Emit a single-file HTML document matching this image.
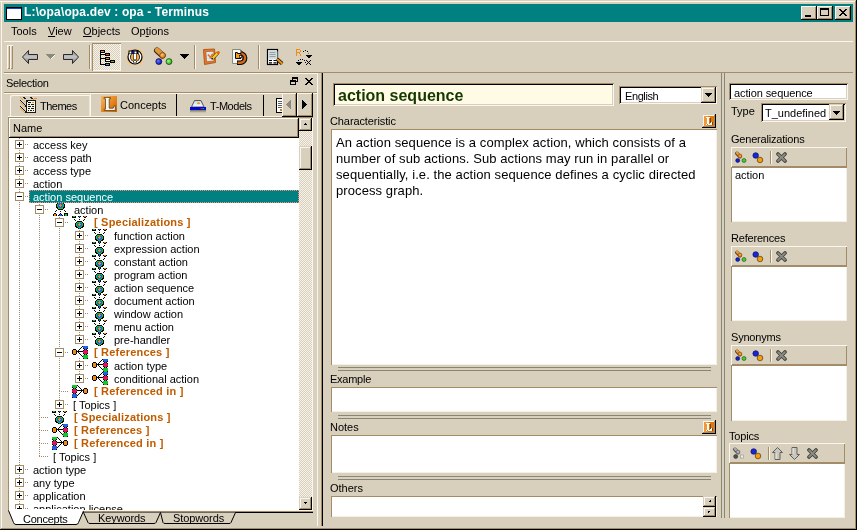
<!DOCTYPE html>
<html><head><meta charset="utf-8"><style>
html,body{margin:0;padding:0;width:857px;height:530px;overflow:hidden;background:#d8d0bd;}
body{position:relative;font-family:"Liberation Sans",sans-serif;font-size:11px;color:#000;}
div,svg{position:absolute;}
.t{white-space:nowrap;line-height:13px;font-size:11px;will-change:transform;}
.dith{background-color:#f6f2ea;background-image:linear-gradient(45deg,#d8d0bd 25%,transparent 25%,transparent 75%,#d8d0bd 75%),linear-gradient(45deg,#d8d0bd 25%,transparent 25%,transparent 75%,#d8d0bd 75%);background-size:2px 2px;background-position:0 0,1px 1px;}
</style></head><body>
<div style="left:0px;top:1px;width:856px;height:1px;background:#faf6ee"></div>
<div style="left:1px;top:1px;width:1px;height:527px;background:#faf6ee"></div>
<div style="left:0px;top:529px;width:857px;height:1px;background:#000000"></div>
<div style="left:856px;top:0px;width:1px;height:530px;background:#000000"></div>
<div style="left:1px;top:528px;width:855px;height:1px;background:#a28d68"></div>
<div style="left:855px;top:1px;width:1px;height:528px;background:#a28d68"></div>
<div style="left:4px;top:4px;width:849px;height:18px;background:#008080"></div>
<svg style="left:6px;top:7px" width="16" height="13" viewBox="0 0 16 13" shape-rendering="crispEdges"><rect x="0" y="0" width="16" height="1" fill="#000"/><rect x="0" y="1" width="1" height="1" fill="#000"/><rect x="1" y="1" width="14" height="1" fill="#2040c0"/><rect x="15" y="1" width="1" height="1" fill="#000"/><rect x="0" y="2" width="1" height="1" fill="#000"/><rect x="1" y="2" width="14" height="1" fill="#fff"/><rect x="15" y="2" width="1" height="1" fill="#000"/><rect x="0" y="3" width="1" height="1" fill="#000"/><rect x="1" y="3" width="14" height="1" fill="#fff"/><rect x="15" y="3" width="1" height="1" fill="#000"/><rect x="0" y="4" width="1" height="1" fill="#000"/><rect x="1" y="4" width="14" height="1" fill="#fff"/><rect x="15" y="4" width="1" height="1" fill="#000"/><rect x="0" y="5" width="1" height="1" fill="#000"/><rect x="1" y="5" width="14" height="1" fill="#fff"/><rect x="15" y="5" width="1" height="1" fill="#000"/><rect x="0" y="6" width="1" height="1" fill="#000"/><rect x="1" y="6" width="14" height="1" fill="#fff"/><rect x="15" y="6" width="1" height="1" fill="#000"/><rect x="0" y="7" width="1" height="1" fill="#000"/><rect x="1" y="7" width="14" height="1" fill="#fff"/><rect x="15" y="7" width="1" height="1" fill="#000"/><rect x="0" y="8" width="1" height="1" fill="#000"/><rect x="1" y="8" width="14" height="1" fill="#fff"/><rect x="15" y="8" width="1" height="1" fill="#000"/><rect x="0" y="9" width="1" height="1" fill="#000"/><rect x="1" y="9" width="14" height="1" fill="#fff"/><rect x="15" y="9" width="1" height="1" fill="#000"/><rect x="0" y="10" width="1" height="1" fill="#000"/><rect x="1" y="10" width="14" height="1" fill="#fff"/><rect x="15" y="10" width="1" height="1" fill="#000"/><rect x="0" y="11" width="1" height="1" fill="#000"/><rect x="1" y="11" width="14" height="1" fill="#fff"/><rect x="15" y="11" width="1" height="1" fill="#000"/><rect x="0" y="12" width="16" height="1" fill="#000"/></svg>
<div class="t" style="left:24px;top:4px;color:#fff;font-weight:bold;font-size:12px;line-height:16px;letter-spacing:0.15px">L:\opa\opa.dev : opa - Terminus</div>
<div style="left:801px;top:6px;width:16px;height:14px;box-shadow:inset -1px -1px #000000,inset 1px 1px #faf6ee,inset -2px -2px #a28d68,inset 2px 2px #d8d0bd;background:#d8d0bd"></div>
<div style="left:817px;top:6px;width:16px;height:14px;box-shadow:inset -1px -1px #000000,inset 1px 1px #faf6ee,inset -2px -2px #a28d68,inset 2px 2px #d8d0bd;background:#d8d0bd"></div>
<div style="left:835px;top:6px;width:16px;height:14px;box-shadow:inset -1px -1px #000000,inset 1px 1px #faf6ee,inset -2px -2px #a28d68,inset 2px 2px #d8d0bd;background:#d8d0bd"></div>
<div style="left:805px;top:15px;width:6px;height:2px;background:#000"></div>
<div style="left:820px;top:8px;width:9px;height:8px;box-shadow:inset 0 2px #000,inset 1px 0 #000,inset -1px 0 #000,inset 0 -1px #000"></div>
<svg style="left:839px;top:9px" width="8" height="7" viewBox="0 0 8 7" shape-rendering="crispEdges"><rect x="0" y="0" width="2" height="1" fill="#000"/><rect x="6" y="0" width="2" height="1" fill="#000"/><rect x="1" y="1" width="2" height="1" fill="#000"/><rect x="5" y="1" width="2" height="1" fill="#000"/><rect x="2" y="2" width="4" height="1" fill="#000"/><rect x="3" y="3" width="2" height="1" fill="#000"/><rect x="2" y="4" width="4" height="1" fill="#000"/><rect x="1" y="5" width="2" height="1" fill="#000"/><rect x="5" y="5" width="2" height="1" fill="#000"/><rect x="0" y="6" width="2" height="1" fill="#000"/><rect x="6" y="6" width="2" height="1" fill="#000"/></svg>
<div class="t" style="left:11px;top:25px;">Tools</div>
<div class="t" style="left:48px;top:25px;"><u>V</u>iew</div>
<div class="t" style="left:83px;top:25px;"><u>O</u>bjects</div>
<div class="t" style="left:131px;top:25px;">Op<u>t</u>ions</div>
<div style="left:4px;top:41px;width:849px;height:1px;background:#faf6ee"></div>
<div style="left:7px;top:45px;width:3px;height:24px;box-shadow:inset 1px 1px #faf6ee,inset -1px -1px #a28d68"></div>
<div style="left:10px;top:45px;width:3px;height:24px;box-shadow:inset 1px 1px #faf6ee,inset -1px -1px #a28d68"></div>
<div style="left:89px;top:45px;width:1px;height:24px;background:#a28d68"></div>
<div style="left:90px;top:45px;width:1px;height:24px;background:#faf6ee"></div>
<div style="left:194px;top:45px;width:1px;height:24px;background:#a28d68"></div>
<div style="left:195px;top:45px;width:1px;height:24px;background:#faf6ee"></div>
<div style="left:258px;top:45px;width:1px;height:24px;background:#a28d68"></div>
<div style="left:259px;top:45px;width:1px;height:24px;background:#faf6ee"></div>
<div style="left:92px;top:43px;width:29px;height:28px;box-shadow:inset 1px 1px #a28d68,inset -1px -1px #faf6ee"></div>
<div class="dith" style="left:93px;top:44px;width:27px;height:26px;"></div>
<div style="left:4px;top:72px;width:849px;height:1px;background:#a28d68"></div>
<div style="left:4px;top:73px;width:314px;height:1px;background:#faf6ee"></div>
<svg style="left:21px;top:49px" width="18" height="16" viewBox="0 0 18 16"><defs><linearGradient id="ag" x1="0" y1="0" x2="0" y2="1"><stop offset="0" stop-color="#8c8c8c"/><stop offset="0.5" stop-color="#c4c4c4"/><stop offset="1" stop-color="#7c7c7c"/></linearGradient></defs><path d="M1.5 8L7.5 1.5V5.5H16.5V10.5H7.5V14.5Z" fill="url(#ag)" stroke="#2a2a2a" stroke-width="1"/></svg>
<svg style="left:46px;top:54px" width="10" height="6" viewBox="0 0 10 6" shape-rendering="crispEdges"><path d="M0 0H9V1H8V2H7V3H6V4H5V5H4V4H3V3H2V2H1V1H0Z" fill="#8a8a7c"/><rect x="5" y="4" width="1" height="1" fill="#fff"/><rect x="6" y="3" width="1" height="1" fill="#fff"/><rect x="7" y="2" width="1" height="1" fill="#fff"/><rect x="8" y="1" width="1" height="1" fill="#fff"/></svg>
<svg style="left:62px;top:49px" width="18" height="16" viewBox="0 0 18 16"><path d="M16.5 8L10.5 1.5V5.5H1.5V10.5H10.5V14.5Z" fill="url(#ag)" stroke="#2a2a2a" stroke-width="1"/></svg>
<svg style="left:100px;top:50px" width="15" height="16" viewBox="0 0 15 16" shape-rendering="crispEdges"><rect x="0" y="0" width="5" height="1" fill="#000"/><rect x="0" y="1" width="1" height="1" fill="#000"/><rect x="1" y="1" width="3" height="1" fill="#f09020"/><rect x="4" y="1" width="1" height="1" fill="#000"/><rect x="0" y="2" width="5" height="1" fill="#000"/><rect x="0" y="3" width="1" height="1" fill="#000"/><rect x="1" y="3" width="4" height="1" fill="#fff"/><rect x="5" y="3" width="5" height="1" fill="#000"/><rect x="0" y="4" width="6" height="1" fill="#000"/><rect x="6" y="4" width="3" height="1" fill="#f04c18"/><rect x="9" y="4" width="1" height="1" fill="#000"/><rect x="0" y="5" width="1" height="1" fill="#000"/><rect x="5" y="5" width="5" height="1" fill="#000"/><rect x="0" y="6" width="1" height="1" fill="#000"/><rect x="0" y="7" width="1" height="1" fill="#000"/><rect x="5" y="7" width="5" height="1" fill="#000"/><rect x="0" y="8" width="6" height="1" fill="#000"/><rect x="6" y="8" width="3" height="1" fill="#c8a020"/><rect x="9" y="8" width="1" height="1" fill="#000"/><rect x="0" y="9" width="1" height="1" fill="#000"/><rect x="5" y="9" width="5" height="1" fill="#000"/><rect x="0" y="10" width="1" height="1" fill="#000"/><rect x="5" y="10" width="1" height="1" fill="#000"/><rect x="6" y="10" width="4" height="1" fill="#fff"/><rect x="10" y="10" width="5" height="1" fill="#000"/><rect x="0" y="11" width="1" height="1" fill="#000"/><rect x="5" y="11" width="6" height="1" fill="#000"/><rect x="11" y="11" width="3" height="1" fill="#88a818"/><rect x="14" y="11" width="1" height="1" fill="#000"/><rect x="0" y="12" width="1" height="1" fill="#000"/><rect x="10" y="12" width="5" height="1" fill="#000"/><rect x="0" y="13" width="1" height="1" fill="#000"/><rect x="5" y="13" width="5" height="1" fill="#000"/><rect x="0" y="14" width="6" height="1" fill="#000"/><rect x="6" y="14" width="3" height="1" fill="#5088f0"/><rect x="9" y="14" width="1" height="1" fill="#000"/><rect x="5" y="15" width="5" height="1" fill="#000"/></svg>
<svg style="left:127px;top:49px" width="16" height="16" viewBox="0 0 16 16">
<rect x="0" y="0" width="16" height="16" rx="4" fill="#f2c890"/>
<circle cx="8" cy="8" r="7.6" fill="#000"/>
<circle cx="8" cy="8" r="6.4" fill="#fff"/>
<circle cx="8" cy="8" r="4.9" fill="#000"/>
<circle cx="8" cy="8.2" r="4.1" fill="#f0a850"/>
<rect x="1.5" y="1.5" width="10" height="3.5" fill="#000"/>
<rect x="2.5" y="2.5" width="2" height="2" fill="#fff"/>
<rect x="4.5" y="2.2" width="3" height="2.6" fill="#101880"/>
<rect x="7.5" y="2.5" width="2" height="2" fill="#fff"/>
<rect x="6.5" y="5" width="3" height="6" fill="#000"/>
<rect x="7" y="5" width="2" height="5.5" fill="#fff"/>
<rect x="6.5" y="11.5" width="3" height="2.5" fill="#000"/>
<rect x="7" y="12" width="2" height="1.6" fill="#fff"/>
</svg>
<svg style="left:152px;top:46px" width="24" height="22" viewBox="0 0 24 22"><defs>
<radialGradient id="bo" cx="0.4" cy="0.4" r="0.6"><stop offset="0" stop-color="#ffc870"/><stop offset="1" stop-color="#d86a00"/></radialGradient>
<radialGradient id="bb" cx="0.4" cy="0.4" r="0.6"><stop offset="0" stop-color="#6a7aff"/><stop offset="1" stop-color="#0010b0"/></radialGradient>
<radialGradient id="bg" cx="0.4" cy="0.4" r="0.6"><stop offset="0" stop-color="#a0ff80"/><stop offset="1" stop-color="#20a010"/></radialGradient></defs>
<path d="M5 4.5L10.5 9.5" stroke="#302010" stroke-width="6" stroke-linecap="round"/>
<path d="M5 4L10.5 9" stroke="#e0983c" stroke-width="4.6" stroke-linecap="round"/>
<circle cx="10.6" cy="9.4" r="2.9" fill="url(#bo)" stroke="#503010" stroke-width="0.6"/>
<circle cx="6.8" cy="15.6" r="3" fill="url(#bb)" stroke="#000040" stroke-width="0.6"/>
<circle cx="17" cy="15.6" r="3" fill="url(#bg)" stroke="#003000" stroke-width="0.6"/>
</svg>
<svg style="left:180px;top:54px" width="9" height="5" viewBox="0 0 9 5" shape-rendering="crispEdges"><rect x="0" y="0" width="9" height="1" fill="#000"/><rect x="1" y="1" width="7" height="1" fill="#000"/><rect x="2" y="2" width="5" height="1" fill="#000"/><rect x="3" y="3" width="3" height="1" fill="#000"/><rect x="4" y="4" width="1" height="1" fill="#000"/></svg>
<svg style="left:200px;top:46px" width="24" height="22" viewBox="0 0 24 22">
<path d="M3.5 3.5L14.5 3L15.5 16.5L4.5 18.5Z" fill="#e07a30" stroke="#b85a18" stroke-width="1"/>
<path d="M5.8 5.5L13.8 5.2L14.2 15L6.5 15.8Z" fill="#d8e8ff" stroke="#c05a10" stroke-width="0.8"/>
<path d="M8.5 9.3L10.3 11.2L12.4 8.6M10.3 11.2L10.2 12.8" stroke="#f07010" stroke-width="1.5" fill="none"/>
<circle cx="8.5" cy="9.2" r="0.9" fill="#f07010"/><circle cx="12.4" cy="8.5" r="0.9" fill="#f07010"/>
<path d="M12.5 12.5L17.8 6.8" stroke="#5a4000" stroke-width="3.4"/>
<path d="M12.5 12.5L17.8 6.8" stroke="#f8d020" stroke-width="2.2"/>
<circle cx="18.3" cy="6.5" r="1.6" fill="#f06010"/>
<path d="M11.6 13.3L12.6 12.3" stroke="#000" stroke-width="1.6"/>
</svg>
<svg style="left:228px;top:46px" width="24" height="22" viewBox="0 0 24 22">
<path d="M4.5 3.5H12.5L14.5 5.5V17.5H4.5Z" fill="#f6f6f2" stroke="#8a8a7a" stroke-width="1"/>
<path d="M12 3.8L14.2 6" stroke="#404040" stroke-width="0.8"/>
<path d="M12.5 7.5A4.6 4.6 0 0 1 12.5 16.7H9" fill="none" stroke="#000" stroke-width="4.6"/>
<path d="M12.5 7.5A4.6 4.6 0 0 1 12.5 16.7H9.6" fill="none" stroke="#d4691c" stroke-width="2.6"/>
<path d="M7.5 6.5H9.5V7.5H13V12.5H7.5Z" fill="#f29a1c" stroke="#000" stroke-width="1"/>
<rect x="9.8" y="5.3" width="2" height="1.6" fill="#fff"/>
<rect x="11.5" y="9.6" width="2.2" height="1.8" fill="#fff" stroke="#000" stroke-width="0.6"/>
</svg>
<svg style="left:264px;top:46px" width="24" height="22" viewBox="0 0 24 22">
<rect x="3.5" y="3.5" width="10" height="15" fill="#fff" stroke="#000" stroke-width="1.2"/>
<path d="M5 14.5H8M9.5 14.5H12.5M5 16.8H8M9.5 16.8H12.5" stroke="#000" stroke-width="1.2"/>
<rect x="4" y="4" width="9.5" height="9.5" rx="2" fill="#d0dadc" opacity="0.95"/>
<path d="M5.5 6.5H11.5M5.5 8.5H11.5M5.5 10.5H11.5" stroke="#8a9aa0" stroke-width="0.9"/>
<path d="M13 13L18.2 17.6" stroke="#000" stroke-width="3.6"/>
<path d="M13 13L18.2 17.6" stroke="#f09010" stroke-width="2.2"/>
</svg>
<svg style="left:292px;top:46px" width="20" height="19" viewBox="0 0 20 19" shape-rendering="crispEdges"><rect x="4" y="3" width="4" height="1" fill="#f08c10"/><rect x="4" y="4" width="1" height="1" fill="#f08c10"/><rect x="8" y="4" width="1" height="1" fill="#f08c10"/><rect x="13" y="4" width="1" height="1" fill="#000"/><rect x="4" y="5" width="1" height="1" fill="#f08c10"/><rect x="8" y="5" width="1" height="1" fill="#f08c10"/><rect x="11" y="5" width="1" height="1" fill="#000"/><rect x="15" y="5" width="1" height="1" fill="#000"/><rect x="4" y="6" width="4" height="1" fill="#f08c10"/><rect x="4" y="7" width="1" height="1" fill="#f08c10"/><rect x="7" y="7" width="1" height="1" fill="#f08c10"/><rect x="16" y="7" width="1" height="1" fill="#707070"/><rect x="4" y="8" width="1" height="1" fill="#f08c10"/><rect x="8" y="8" width="1" height="1" fill="#f08c10"/><rect x="4" y="9" width="1" height="1" fill="#f08c10"/><rect x="8" y="9" width="1" height="1" fill="#f08c10"/><rect x="14" y="9" width="6" height="1" fill="#000"/><rect x="15" y="10" width="4" height="1" fill="#000"/><rect x="16" y="11" width="2" height="1" fill="#000"/><rect x="8" y="13" width="1" height="1" fill="#000"/><rect x="10" y="13" width="1" height="1" fill="#000"/><rect x="6" y="14" width="1" height="1" fill="#000"/><rect x="12" y="14" width="1" height="1" fill="#000"/><rect x="14" y="14" width="1" height="1" fill="#000"/><rect x="18" y="14" width="1" height="1" fill="#000"/><rect x="15" y="15" width="1" height="1" fill="#000"/><rect x="17" y="15" width="1" height="1" fill="#000"/><rect x="4" y="16" width="6" height="1" fill="#000"/><rect x="13" y="16" width="1" height="1" fill="#000"/><rect x="16" y="16" width="1" height="1" fill="#000"/><rect x="5" y="17" width="4" height="1" fill="#000"/><rect x="15" y="17" width="1" height="1" fill="#000"/><rect x="17" y="17" width="1" height="1" fill="#000"/><rect x="6" y="18" width="2" height="1" fill="#000"/><rect x="14" y="18" width="1" height="1" fill="#000"/><rect x="18" y="18" width="1" height="1" fill="#000"/></svg>
<div class="t" style="left:6px;top:77px;letter-spacing:-0.3px">Selection</div>
<div style="left:317px;top:73px;width:1px;height:20px;background:#faf6ee"></div>
<svg style="left:290px;top:77px" width="8" height="8" viewBox="0 0 8 8" shape-rendering="crispEdges"><rect x="2" y="0" width="6" height="1" fill="#000"/><rect x="2" y="1" width="6" height="1" fill="#000"/><rect x="2" y="2" width="1" height="1" fill="#000"/><rect x="7" y="2" width="1" height="1" fill="#000"/><rect x="0" y="3" width="6" height="1" fill="#000"/><rect x="7" y="3" width="1" height="1" fill="#000"/><rect x="0" y="4" width="8" height="1" fill="#000"/><rect x="0" y="5" width="1" height="1" fill="#000"/><rect x="5" y="5" width="1" height="1" fill="#000"/><rect x="0" y="6" width="1" height="1" fill="#000"/><rect x="5" y="6" width="1" height="1" fill="#000"/><rect x="0" y="7" width="6" height="1" fill="#000"/></svg>
<svg style="left:305px;top:78px" width="8" height="7" viewBox="0 0 8 7" shape-rendering="crispEdges"><rect x="0" y="0" width="2" height="1" fill="#000"/><rect x="6" y="0" width="2" height="1" fill="#000"/><rect x="1" y="1" width="2" height="1" fill="#000"/><rect x="5" y="1" width="2" height="1" fill="#000"/><rect x="2" y="2" width="4" height="1" fill="#000"/><rect x="3" y="3" width="2" height="1" fill="#000"/><rect x="2" y="4" width="4" height="1" fill="#000"/><rect x="1" y="5" width="2" height="1" fill="#000"/><rect x="5" y="5" width="2" height="1" fill="#000"/><rect x="0" y="6" width="2" height="1" fill="#000"/><rect x="6" y="6" width="2" height="1" fill="#000"/></svg>
<div style="left:4px;top:92px;width:313px;height:1px;background:#a28d68"></div>
<div style="left:4px;top:93px;width:313px;height:1px;background:#faf6ee"></div>
<div style="left:10px;top:95px;width:80px;height:21px;box-shadow:inset 1px 1px #faf6ee,inset -1px 0 #ebe6da;border-top-left-radius:2px"></div>
<svg style="left:16px;top:94px" width="24" height="19" viewBox="0 0 24 19" shape-rendering="crispEdges"><rect x="4" y="3" width="1" height="1" fill="#f0a040"/><rect x="7" y="3" width="2" height="1" fill="#181818"/><rect x="14" y="3" width="2" height="1" fill="#181818"/><rect x="5" y="4" width="1" height="1" fill="#f0a040"/><rect x="8" y="4" width="2" height="1" fill="#181818"/><rect x="15" y="4" width="2" height="1" fill="#181818"/><rect x="18" y="4" width="3" height="1" fill="#f08c20"/><rect x="6" y="5" width="1" height="1" fill="#f0a040"/><rect x="17" y="5" width="1" height="1" fill="#f08c20"/><rect x="4" y="6" width="1" height="1" fill="#181818"/><rect x="10" y="6" width="10" height="1" fill="#181818"/><rect x="5" y="7" width="1" height="1" fill="#181818"/><rect x="8" y="7" width="1" height="1" fill="#f0a040"/><rect x="10" y="7" width="2" height="1" fill="#181818"/><rect x="12" y="7" width="7" height="1" fill="#f8f4e6"/><rect x="19" y="7" width="1" height="1" fill="#181818"/><rect x="4" y="8" width="1" height="1" fill="#f0a040"/><rect x="6" y="8" width="1" height="1" fill="#181818"/><rect x="10" y="8" width="1" height="1" fill="#181818"/><rect x="11" y="8" width="1" height="1" fill="#f8f4e6"/><rect x="12" y="8" width="3" height="1" fill="#181818"/><rect x="15" y="8" width="1" height="1" fill="#f8f4e6"/><rect x="16" y="8" width="2" height="1" fill="#f08c20"/><rect x="18" y="8" width="1" height="1" fill="#f8f4e6"/><rect x="19" y="8" width="1" height="1" fill="#181818"/><rect x="5" y="9" width="1" height="1" fill="#f0a040"/><rect x="7" y="9" width="1" height="1" fill="#181818"/><rect x="10" y="9" width="1" height="1" fill="#181818"/><rect x="11" y="9" width="8" height="1" fill="#f8f4e6"/><rect x="19" y="9" width="1" height="1" fill="#181818"/><rect x="6" y="10" width="1" height="1" fill="#f0a040"/><rect x="8" y="10" width="1" height="1" fill="#181818"/><rect x="10" y="10" width="1" height="1" fill="#181818"/><rect x="11" y="10" width="1" height="1" fill="#f8f4e6"/><rect x="12" y="10" width="2" height="1" fill="#181818"/><rect x="14" y="10" width="1" height="1" fill="#f8f4e6"/><rect x="15" y="10" width="3" height="1" fill="#181818"/><rect x="18" y="10" width="1" height="1" fill="#f8f4e6"/><rect x="19" y="10" width="1" height="1" fill="#181818"/><rect x="7" y="11" width="1" height="1" fill="#f0a040"/><rect x="9" y="11" width="2" height="1" fill="#181818"/><rect x="11" y="11" width="8" height="1" fill="#f8f4e6"/><rect x="19" y="11" width="1" height="1" fill="#181818"/><rect x="4" y="12" width="1" height="1" fill="#181818"/><rect x="8" y="12" width="1" height="1" fill="#f0a040"/><rect x="9" y="12" width="2" height="1" fill="#181818"/><rect x="11" y="12" width="1" height="1" fill="#f8f4e6"/><rect x="12" y="12" width="3" height="1" fill="#181818"/><rect x="15" y="12" width="1" height="1" fill="#f8f4e6"/><rect x="16" y="12" width="2" height="1" fill="#181818"/><rect x="18" y="12" width="1" height="1" fill="#f8f4e6"/><rect x="19" y="12" width="1" height="1" fill="#181818"/><rect x="5" y="13" width="1" height="1" fill="#181818"/><rect x="10" y="13" width="1" height="1" fill="#181818"/><rect x="11" y="13" width="8" height="1" fill="#f8f4e6"/><rect x="19" y="13" width="1" height="1" fill="#181818"/><rect x="4" y="14" width="1" height="1" fill="#f0a040"/><rect x="6" y="14" width="1" height="1" fill="#181818"/><rect x="10" y="14" width="1" height="1" fill="#181818"/><rect x="11" y="14" width="1" height="1" fill="#f8f4e6"/><rect x="12" y="14" width="2" height="1" fill="#181818"/><rect x="14" y="14" width="1" height="1" fill="#f8f4e6"/><rect x="15" y="14" width="3" height="1" fill="#181818"/><rect x="18" y="14" width="1" height="1" fill="#f8f4e6"/><rect x="19" y="14" width="1" height="1" fill="#181818"/><rect x="5" y="15" width="1" height="1" fill="#f0a040"/><rect x="7" y="15" width="1" height="1" fill="#181818"/><rect x="10" y="15" width="1" height="1" fill="#181818"/><rect x="11" y="15" width="8" height="1" fill="#f8f4e6"/><rect x="19" y="15" width="1" height="1" fill="#181818"/><rect x="6" y="16" width="1" height="1" fill="#f0a040"/><rect x="8" y="16" width="1" height="1" fill="#181818"/><rect x="10" y="16" width="1" height="1" fill="#181818"/><rect x="11" y="16" width="1" height="1" fill="#f8f4e6"/><rect x="12" y="16" width="1" height="1" fill="#181818"/><rect x="13" y="16" width="1" height="1" fill="#f8f4e6"/><rect x="14" y="16" width="2" height="1" fill="#181818"/><rect x="16" y="16" width="1" height="1" fill="#f8f4e6"/><rect x="17" y="16" width="1" height="1" fill="#181818"/><rect x="18" y="16" width="1" height="1" fill="#f8f4e6"/><rect x="19" y="16" width="1" height="1" fill="#181818"/><rect x="7" y="17" width="1" height="1" fill="#f0a040"/><rect x="9" y="17" width="2" height="1" fill="#181818"/><rect x="11" y="17" width="8" height="1" fill="#f8f4e6"/><rect x="19" y="17" width="1" height="1" fill="#181818"/><rect x="8" y="18" width="1" height="1" fill="#f0a040"/><rect x="9" y="18" width="11" height="1" fill="#181818"/></svg>
<div class="t" style="left:40px;top:100px;letter-spacing:-0.5px">Themes</div>
<div style="left:90px;top:93px;width:87px;height:24px;background:#d8d0bd;box-shadow:inset 1px 1px #faf6ee,inset -1px 0 #000000"></div>
<svg style="left:101px;top:96px" width="16" height="16" viewBox="0 0 16 16"><defs><linearGradient id="og" x1="0" y1="0" x2="1" y2="1"><stop offset="0" stop-color="#f8b868"/><stop offset="0.5" stop-color="#e88a20"/><stop offset="1" stop-color="#c86000"/></linearGradient></defs><rect width="16" height="16" fill="url(#og)"/>
<path d="M3 1.5H9.5V2.8H8.2V12.2H12.2L13.5 9.5H14.3V14.5H3.2V13.2H4.5V2.8H3Z" fill="#f4f6fa" stroke="#503000" stroke-width="0.7"/></svg>
<div class="t" style="left:120px;top:99px;">Concepts</div>
<div style="left:177px;top:95px;width:87px;height:21px;box-shadow:inset -1px 0 #000000"></div>
<svg style="left:186px;top:94px" width="24" height="22" viewBox="0 0 24 22"><defs><linearGradient id="tm" x1="0" y1="0" x2="0" y2="1"><stop offset="0" stop-color="#c8d4d8"/><stop offset="1" stop-color="#ffffff"/></linearGradient><linearGradient id="ts" x1="0" y1="0" x2="0" y2="1"><stop offset="0" stop-color="#505040"/><stop offset="1" stop-color="#d8d0bd"/></linearGradient></defs>
<path d="M8.5 6.5H15L18 13H5.5Z" fill="url(#tm)" stroke="#505a5c" stroke-width="1"/>
<ellipse cx="12.5" cy="9.2" rx="1.5" ry="1" fill="#f09020"/>
<rect x="4" y="13" width="16" height="3" fill="#0008d0"/>
<rect x="14.6" y="14" width="1.2" height="1.2" fill="#e02020"/><rect x="16.6" y="14" width="1.2" height="1.2" fill="#20e020"/>
<rect x="4" y="16" width="16" height="3" fill="url(#ts)" opacity="0.7"/>
</svg>
<div class="t" style="left:210px;top:100px;letter-spacing:-0.45px">T-Models</div>
<div style="left:264px;top:95px;width:18px;height:21px;overflow:hidden">
<svg style="left:12px;top:3px" width="8" height="15" viewBox="0 0 8 15" shape-rendering="crispEdges"><rect x="0" y="0" width="8" height="15" fill="#000"/><rect x="1" y="1" width="7" height="13" fill="#fff"/><rect x="2" y="3" width="5" height="1" fill="#606060"/><rect x="2" y="5" width="5" height="1" fill="#606060"/><rect x="2" y="7" width="5" height="1" fill="#606060"/><rect x="2" y="9" width="5" height="1" fill="#606060"/><rect x="4" y="11" width="3" height="2" fill="#c08030"/></svg>
</div>
<div style="left:282px;top:93px;width:15px;height:24px;box-shadow:inset -1px -1px #000000,inset 1px 1px #faf6ee,inset -2px -2px #a28d68,inset 2px 2px #d8d0bd;background:#d8d0bd"></div>
<div style="left:297px;top:93px;width:16px;height:24px;box-shadow:inset -1px -1px #000000,inset 1px 1px #faf6ee,inset -2px -2px #a28d68,inset 2px 2px #d8d0bd;background:#d8d0bd"></div>
<svg style="left:286px;top:100px" width="5" height="9" viewBox="0 0 5 9" shape-rendering="crispEdges"><rect x="4" y="0" width="1" height="1" fill="#8a8a7c"/><rect x="3" y="1" width="2" height="1" fill="#8a8a7c"/><rect x="2" y="2" width="3" height="1" fill="#8a8a7c"/><rect x="1" y="3" width="4" height="1" fill="#8a8a7c"/><rect x="0" y="4" width="5" height="1" fill="#8a8a7c"/><rect x="1" y="5" width="4" height="1" fill="#8a8a7c"/><rect x="2" y="6" width="3" height="1" fill="#8a8a7c"/><rect x="3" y="7" width="2" height="1" fill="#8a8a7c"/><rect x="4" y="8" width="1" height="1" fill="#8a8a7c"/></svg>
<svg style="left:302px;top:100px" width="5" height="9" viewBox="0 0 5 9" shape-rendering="crispEdges"><rect x="0" y="0" width="1" height="1" fill="#000"/><rect x="0" y="1" width="2" height="1" fill="#000"/><rect x="0" y="2" width="3" height="1" fill="#000"/><rect x="0" y="3" width="4" height="1" fill="#000"/><rect x="0" y="4" width="5" height="1" fill="#000"/><rect x="0" y="5" width="4" height="1" fill="#000"/><rect x="0" y="6" width="3" height="1" fill="#000"/><rect x="0" y="7" width="2" height="1" fill="#000"/><rect x="0" y="8" width="1" height="1" fill="#000"/></svg>
<div style="left:8px;top:116px;width:274px;height:1px;background:#faf6ee"></div>
<div style="left:8px;top:117px;width:305px;height:394px;background:#fff;box-shadow:inset 1px 1px #a28d68,inset -1px -1px #f8f6f0"></div>
<div style="left:9px;top:118px;width:290px;height:20px;background:#d8d0bd;box-shadow:inset -1px -1px #000,inset 1px 1px #fff,inset -2px -2px #a28d68"></div>
<div class="t" style="left:13px;top:122px;">Name</div>
<div class="dith" style="left:299px;top:131px;width:13px;height:366px;"></div>
<div style="left:299px;top:118px;width:13px;height:13px;box-shadow:inset -1px -1px #000000,inset 1px 1px #d8d0bd,inset -2px -2px #a28d68,inset 2px 2px #faf6ee;background:#d8d0bd"></div>
<svg style="left:303px;top:123px" width="5" height="2" viewBox="0 0 5 2" shape-rendering="crispEdges"><rect x="2" y="0" width="1" height="1" fill="#000"/><rect x="1" y="1" width="3" height="1" fill="#000"/></svg>
<div style="left:299px;top:146px;width:13px;height:24px;box-shadow:inset -1px -1px #000000,inset 1px 1px #d8d0bd,inset -2px -2px #a28d68,inset 2px 2px #faf6ee;background:#d8d0bd"></div>
<div style="left:299px;top:497px;width:13px;height:13px;box-shadow:inset -1px -1px #000000,inset 1px 1px #d8d0bd,inset -2px -2px #a28d68,inset 2px 2px #faf6ee;background:#d8d0bd"></div>
<svg style="left:303px;top:502px" width="5" height="2" viewBox="0 0 5 2" shape-rendering="crispEdges"><rect x="1" y="0" width="3" height="1" fill="#000"/><rect x="2" y="1" width="1" height="1" fill="#000"/></svg>
<svg style="left:0;top:0;width:0;height:0"><defs><symbol id="spec" viewBox="0 0 16 13"><rect x="0" y="0" width="1" height="1" fill="#000"/><rect x="1" y="0" width="2" height="1" fill="#10c830"/><rect x="3" y="0" width="1" height="1" fill="#000"/><rect x="6" y="0" width="1" height="1" fill="#000"/><rect x="7" y="0" width="1" height="1" fill="#2060e8"/><rect x="8" y="0" width="1" height="1" fill="#000"/><rect x="11" y="0" width="1" height="1" fill="#000"/><rect x="12" y="0" width="2" height="1" fill="#f08c10"/><rect x="14" y="0" width="1" height="1" fill="#000"/><rect x="0" y="1" width="4" height="1" fill="#000"/><rect x="7" y="1" width="1" height="1" fill="#000"/><rect x="12" y="1" width="2" height="1" fill="#000"/><rect x="2" y="3" width="1" height="1" fill="#000"/><rect x="7" y="3" width="1" height="1" fill="#000"/><rect x="12" y="3" width="1" height="1" fill="#000"/><rect x="3" y="4" width="1" height="1" fill="#000"/><rect x="11" y="4" width="1" height="1" fill="#000"/><rect x="5" y="5" width="5" height="1" fill="#000"/><rect x="4" y="6" width="1" height="1" fill="#000"/><rect x="5" y="6" width="5" height="1" fill="#10c830"/><rect x="10" y="6" width="1" height="1" fill="#000"/><rect x="3" y="7" width="1" height="1" fill="#000"/><rect x="4" y="7" width="1" height="1" fill="#10c830"/><rect x="5" y="7" width="2" height="1" fill="#2060e8"/><rect x="7" y="7" width="1" height="1" fill="#f08c10"/><rect x="8" y="7" width="2" height="1" fill="#2060e8"/><rect x="10" y="7" width="1" height="1" fill="#10c830"/><rect x="11" y="7" width="1" height="1" fill="#000"/><rect x="3" y="8" width="1" height="1" fill="#000"/><rect x="4" y="8" width="1" height="1" fill="#10c830"/><rect x="5" y="8" width="1" height="1" fill="#2060e8"/><rect x="6" y="8" width="3" height="1" fill="#f08c10"/><rect x="9" y="8" width="1" height="1" fill="#2060e8"/><rect x="10" y="8" width="1" height="1" fill="#10c830"/><rect x="11" y="8" width="1" height="1" fill="#000"/><rect x="3" y="9" width="1" height="1" fill="#000"/><rect x="4" y="9" width="1" height="1" fill="#10c830"/><rect x="5" y="9" width="2" height="1" fill="#2060e8"/><rect x="7" y="9" width="1" height="1" fill="#f08c10"/><rect x="8" y="9" width="2" height="1" fill="#2060e8"/><rect x="10" y="9" width="1" height="1" fill="#10c830"/><rect x="11" y="9" width="1" height="1" fill="#000"/><rect x="3" y="10" width="2" height="1" fill="#000"/><rect x="5" y="10" width="1" height="1" fill="#10c830"/><rect x="6" y="10" width="3" height="1" fill="#2060e8"/><rect x="9" y="10" width="1" height="1" fill="#10c830"/><rect x="10" y="10" width="2" height="1" fill="#000"/><rect x="4" y="11" width="2" height="1" fill="#000"/><rect x="6" y="11" width="3" height="1" fill="#10c830"/><rect x="9" y="11" width="2" height="1" fill="#000"/><rect x="6" y="12" width="1" height="1" fill="#000"/><rect x="7" y="12" width="1" height="1" fill="#2060e8"/><rect x="8" y="12" width="1" height="1" fill="#000"/></symbol><symbol id="gen" viewBox="0 0 16 13"><rect x="5" y="0" width="1" height="1" fill="#000"/><rect x="6" y="0" width="1" height="1" fill="#10c830"/><rect x="7" y="0" width="3" height="1" fill="#2060e8"/><rect x="10" y="0" width="1" height="1" fill="#10c830"/><rect x="11" y="0" width="1" height="1" fill="#000"/><rect x="4" y="1" width="1" height="1" fill="#000"/><rect x="5" y="1" width="1" height="1" fill="#10c830"/><rect x="6" y="1" width="2" height="1" fill="#2060e8"/><rect x="8" y="1" width="1" height="1" fill="#f08c10"/><rect x="9" y="1" width="2" height="1" fill="#2060e8"/><rect x="11" y="1" width="1" height="1" fill="#10c830"/><rect x="12" y="1" width="1" height="1" fill="#000"/><rect x="4" y="2" width="1" height="1" fill="#000"/><rect x="5" y="2" width="1" height="1" fill="#10c830"/><rect x="6" y="2" width="1" height="1" fill="#2060e8"/><rect x="7" y="2" width="3" height="1" fill="#f08c10"/><rect x="10" y="2" width="1" height="1" fill="#2060e8"/><rect x="11" y="2" width="1" height="1" fill="#10c830"/><rect x="12" y="2" width="1" height="1" fill="#000"/><rect x="4" y="3" width="1" height="1" fill="#000"/><rect x="5" y="3" width="1" height="1" fill="#10c830"/><rect x="6" y="3" width="2" height="1" fill="#2060e8"/><rect x="8" y="3" width="1" height="1" fill="#f08c10"/><rect x="9" y="3" width="2" height="1" fill="#2060e8"/><rect x="11" y="3" width="1" height="1" fill="#10c830"/><rect x="12" y="3" width="1" height="1" fill="#000"/><rect x="4" y="4" width="2" height="1" fill="#000"/><rect x="6" y="4" width="1" height="1" fill="#10c830"/><rect x="7" y="4" width="3" height="1" fill="#2060e8"/><rect x="10" y="4" width="1" height="1" fill="#10c830"/><rect x="11" y="4" width="2" height="1" fill="#000"/><rect x="5" y="5" width="1" height="1" fill="#000"/><rect x="6" y="5" width="5" height="1" fill="#10c830"/><rect x="11" y="5" width="1" height="1" fill="#000"/><rect x="6" y="6" width="5" height="1" fill="#000"/><rect x="4" y="7" width="1" height="1" fill="#000"/><rect x="12" y="7" width="1" height="1" fill="#000"/><rect x="3" y="8" width="1" height="1" fill="#000"/><rect x="8" y="8" width="1" height="1" fill="#000"/><rect x="13" y="8" width="1" height="1" fill="#000"/><rect x="2" y="10" width="2" height="1" fill="#000"/><rect x="8" y="10" width="1" height="1" fill="#000"/><rect x="12" y="10" width="4" height="1" fill="#000"/><rect x="1" y="11" width="1" height="1" fill="#000"/><rect x="2" y="11" width="2" height="1" fill="#f08c10"/><rect x="4" y="11" width="1" height="1" fill="#000"/><rect x="7" y="11" width="1" height="1" fill="#000"/><rect x="8" y="11" width="1" height="1" fill="#2060e8"/><rect x="9" y="11" width="1" height="1" fill="#000"/><rect x="12" y="11" width="1" height="1" fill="#000"/><rect x="13" y="11" width="2" height="1" fill="#10c830"/><rect x="15" y="11" width="1" height="1" fill="#000"/><rect x="1" y="12" width="1" height="1" fill="#000"/><rect x="2" y="12" width="2" height="1" fill="#f08c10"/><rect x="4" y="12" width="1" height="1" fill="#000"/><rect x="6" y="12" width="1" height="1" fill="#000"/><rect x="7" y="12" width="3" height="1" fill="#2060e8"/><rect x="10" y="12" width="1" height="1" fill="#000"/><rect x="12" y="12" width="1" height="1" fill="#000"/><rect x="13" y="12" width="2" height="1" fill="#10c830"/><rect x="15" y="12" width="1" height="1" fill="#000"/></symbol><symbol id="ref" viewBox="0 0 16 13"><rect x="10" y="0" width="1" height="1" fill="#000"/><rect x="11" y="0" width="5" height="1" fill="#2060e8"/><rect x="9" y="1" width="1" height="1" fill="#000"/><rect x="11" y="1" width="5" height="1" fill="#2060e8"/><rect x="8" y="2" width="1" height="1" fill="#000"/><rect x="11" y="2" width="1" height="1" fill="#000"/><rect x="12" y="2" width="3" height="1" fill="#2060e8"/><rect x="15" y="2" width="1" height="1" fill="#000"/><rect x="1" y="3" width="3" height="1" fill="#000"/><rect x="7" y="3" width="1" height="1" fill="#000"/><rect x="12" y="3" width="1" height="1" fill="#000"/><rect x="13" y="3" width="1" height="1" fill="#2060e8"/><rect x="14" y="3" width="1" height="1" fill="#000"/><rect x="0" y="4" width="1" height="1" fill="#000"/><rect x="1" y="4" width="3" height="1" fill="#f08c10"/><rect x="4" y="4" width="1" height="1" fill="#000"/><rect x="6" y="4" width="1" height="1" fill="#000"/><rect x="11" y="4" width="1" height="1" fill="#000"/><rect x="12" y="4" width="3" height="1" fill="#e8105c"/><rect x="15" y="4" width="1" height="1" fill="#000"/><rect x="0" y="5" width="1" height="1" fill="#000"/><rect x="1" y="5" width="3" height="1" fill="#f08c10"/><rect x="4" y="5" width="7" height="1" fill="#000"/><rect x="11" y="5" width="5" height="1" fill="#e8105c"/><rect x="0" y="6" width="1" height="1" fill="#000"/><rect x="1" y="6" width="3" height="1" fill="#f08c10"/><rect x="4" y="6" width="1" height="1" fill="#000"/><rect x="6" y="6" width="1" height="1" fill="#000"/><rect x="11" y="6" width="5" height="1" fill="#e8105c"/><rect x="0" y="7" width="1" height="1" fill="#000"/><rect x="1" y="7" width="3" height="1" fill="#f08c10"/><rect x="4" y="7" width="1" height="1" fill="#000"/><rect x="7" y="7" width="1" height="1" fill="#000"/><rect x="11" y="7" width="1" height="1" fill="#000"/><rect x="12" y="7" width="3" height="1" fill="#e8105c"/><rect x="15" y="7" width="1" height="1" fill="#000"/><rect x="1" y="8" width="3" height="1" fill="#000"/><rect x="8" y="8" width="1" height="1" fill="#000"/><rect x="12" y="8" width="1" height="1" fill="#000"/><rect x="13" y="8" width="1" height="1" fill="#10c830"/><rect x="14" y="8" width="1" height="1" fill="#000"/><rect x="9" y="9" width="1" height="1" fill="#000"/><rect x="11" y="9" width="5" height="1" fill="#10c830"/><rect x="10" y="10" width="1" height="1" fill="#000"/><rect x="11" y="10" width="5" height="1" fill="#10c830"/><rect x="11" y="11" width="5" height="1" fill="#10c830"/><rect x="11" y="12" width="1" height="1" fill="#000"/><rect x="12" y="12" width="3" height="1" fill="#10c830"/><rect x="15" y="12" width="1" height="1" fill="#000"/></symbol><symbol id="refin" viewBox="0 0 16 13"><rect x="0" y="0" width="5" height="1" fill="#10c830"/><rect x="5" y="0" width="1" height="1" fill="#000"/><rect x="0" y="1" width="5" height="1" fill="#10c830"/><rect x="6" y="1" width="1" height="1" fill="#000"/><rect x="0" y="2" width="1" height="1" fill="#000"/><rect x="1" y="2" width="3" height="1" fill="#10c830"/><rect x="4" y="2" width="1" height="1" fill="#000"/><rect x="7" y="2" width="1" height="1" fill="#000"/><rect x="1" y="3" width="1" height="1" fill="#000"/><rect x="2" y="3" width="1" height="1" fill="#10c830"/><rect x="3" y="3" width="1" height="1" fill="#000"/><rect x="8" y="3" width="1" height="1" fill="#000"/><rect x="12" y="3" width="3" height="1" fill="#000"/><rect x="0" y="4" width="1" height="1" fill="#000"/><rect x="1" y="4" width="3" height="1" fill="#e8105c"/><rect x="4" y="4" width="1" height="1" fill="#000"/><rect x="9" y="4" width="1" height="1" fill="#000"/><rect x="11" y="4" width="1" height="1" fill="#000"/><rect x="12" y="4" width="3" height="1" fill="#f08c10"/><rect x="15" y="4" width="1" height="1" fill="#000"/><rect x="0" y="5" width="5" height="1" fill="#e8105c"/><rect x="5" y="5" width="7" height="1" fill="#000"/><rect x="12" y="5" width="3" height="1" fill="#f08c10"/><rect x="15" y="5" width="1" height="1" fill="#000"/><rect x="0" y="6" width="5" height="1" fill="#e8105c"/><rect x="9" y="6" width="1" height="1" fill="#000"/><rect x="11" y="6" width="1" height="1" fill="#000"/><rect x="12" y="6" width="3" height="1" fill="#f08c10"/><rect x="15" y="6" width="1" height="1" fill="#000"/><rect x="0" y="7" width="1" height="1" fill="#000"/><rect x="1" y="7" width="3" height="1" fill="#e8105c"/><rect x="4" y="7" width="1" height="1" fill="#000"/><rect x="8" y="7" width="1" height="1" fill="#000"/><rect x="11" y="7" width="1" height="1" fill="#000"/><rect x="12" y="7" width="3" height="1" fill="#f08c10"/><rect x="15" y="7" width="1" height="1" fill="#000"/><rect x="1" y="8" width="1" height="1" fill="#000"/><rect x="2" y="8" width="1" height="1" fill="#2060e8"/><rect x="3" y="8" width="1" height="1" fill="#000"/><rect x="7" y="8" width="1" height="1" fill="#000"/><rect x="12" y="8" width="3" height="1" fill="#000"/><rect x="0" y="9" width="5" height="1" fill="#2060e8"/><rect x="6" y="9" width="1" height="1" fill="#000"/><rect x="0" y="10" width="5" height="1" fill="#2060e8"/><rect x="5" y="10" width="1" height="1" fill="#000"/><rect x="0" y="11" width="5" height="1" fill="#2060e8"/><rect x="0" y="12" width="1" height="1" fill="#000"/><rect x="1" y="12" width="3" height="1" fill="#2060e8"/><rect x="4" y="12" width="1" height="1" fill="#000"/></symbol></defs></svg>
<div style="left:9px;top:138px;width:290px;height:372px;overflow:hidden">
<div style="left:20px;top:52px;width:270px;height:13px;background:#008080"></div>
<div style="left:20px;top:52px;width:270px;height:13px;box-sizing:border-box;border:1px dotted #ff9080"></div>
<div style="left:10px;top:6px;width:1px;height:13px;background-image:linear-gradient(to bottom,#a28d68 50%,transparent 50%);background-size:1px 2px"></div>
<div style="left:16px;top:6px;width:4px;height:1px;background-image:linear-gradient(to right,#a28d68 50%,transparent 50%);background-size:2px 1px"></div>
<div style="left:10px;top:19px;width:1px;height:13px;background-image:linear-gradient(to bottom,#a28d68 50%,transparent 50%);background-size:1px 2px"></div>
<div style="left:16px;top:19px;width:4px;height:1px;background-image:linear-gradient(to right,#a28d68 50%,transparent 50%);background-size:2px 1px"></div>
<div style="left:10px;top:32px;width:1px;height:13px;background-image:linear-gradient(to bottom,#a28d68 50%,transparent 50%);background-size:1px 2px"></div>
<div style="left:16px;top:32px;width:4px;height:1px;background-image:linear-gradient(to right,#a28d68 50%,transparent 50%);background-size:2px 1px"></div>
<div style="left:10px;top:45px;width:1px;height:13px;background-image:linear-gradient(to bottom,#a28d68 50%,transparent 50%);background-size:1px 2px"></div>
<div style="left:16px;top:45px;width:4px;height:1px;background-image:linear-gradient(to right,#a28d68 50%,transparent 50%);background-size:2px 1px"></div>
<div style="left:10px;top:58px;width:1px;height:273px;background-image:linear-gradient(to bottom,#a28d68 50%,transparent 50%);background-size:1px 2px"></div>
<div style="left:16px;top:58px;width:4px;height:1px;background-image:linear-gradient(to right,#a28d68 50%,transparent 50%);background-size:2px 1px"></div>
<div style="left:30px;top:71px;width:1px;height:208px;background-image:linear-gradient(to bottom,#a28d68 50%,transparent 50%);background-size:1px 2px"></div>
<div style="left:30px;top:64px;width:1px;height:7px;background-image:linear-gradient(to bottom,#a28d68 50%,transparent 50%);background-size:1px 2px"></div>
<div style="left:36px;top:71px;width:4px;height:1px;background-image:linear-gradient(to right,#a28d68 50%,transparent 50%);background-size:2px 1px"></div>
<div style="left:50px;top:84px;width:1px;height:130px;background-image:linear-gradient(to bottom,#a28d68 50%,transparent 50%);background-size:1px 2px"></div>
<div style="left:50px;top:77px;width:1px;height:7px;background-image:linear-gradient(to bottom,#a28d68 50%,transparent 50%);background-size:1px 2px"></div>
<div style="left:56px;top:84px;width:4px;height:1px;background-image:linear-gradient(to right,#a28d68 50%,transparent 50%);background-size:2px 1px"></div>
<div style="left:70px;top:97px;width:1px;height:13px;background-image:linear-gradient(to bottom,#a28d68 50%,transparent 50%);background-size:1px 2px"></div>
<div style="left:70px;top:90px;width:1px;height:7px;background-image:linear-gradient(to bottom,#a28d68 50%,transparent 50%);background-size:1px 2px"></div>
<div style="left:76px;top:97px;width:4px;height:1px;background-image:linear-gradient(to right,#a28d68 50%,transparent 50%);background-size:2px 1px"></div>
<div style="left:70px;top:110px;width:1px;height:13px;background-image:linear-gradient(to bottom,#a28d68 50%,transparent 50%);background-size:1px 2px"></div>
<div style="left:76px;top:110px;width:4px;height:1px;background-image:linear-gradient(to right,#a28d68 50%,transparent 50%);background-size:2px 1px"></div>
<div style="left:70px;top:123px;width:1px;height:13px;background-image:linear-gradient(to bottom,#a28d68 50%,transparent 50%);background-size:1px 2px"></div>
<div style="left:76px;top:123px;width:4px;height:1px;background-image:linear-gradient(to right,#a28d68 50%,transparent 50%);background-size:2px 1px"></div>
<div style="left:70px;top:136px;width:1px;height:13px;background-image:linear-gradient(to bottom,#a28d68 50%,transparent 50%);background-size:1px 2px"></div>
<div style="left:76px;top:136px;width:4px;height:1px;background-image:linear-gradient(to right,#a28d68 50%,transparent 50%);background-size:2px 1px"></div>
<div style="left:70px;top:149px;width:1px;height:13px;background-image:linear-gradient(to bottom,#a28d68 50%,transparent 50%);background-size:1px 2px"></div>
<div style="left:76px;top:149px;width:4px;height:1px;background-image:linear-gradient(to right,#a28d68 50%,transparent 50%);background-size:2px 1px"></div>
<div style="left:70px;top:162px;width:1px;height:13px;background-image:linear-gradient(to bottom,#a28d68 50%,transparent 50%);background-size:1px 2px"></div>
<div style="left:76px;top:162px;width:4px;height:1px;background-image:linear-gradient(to right,#a28d68 50%,transparent 50%);background-size:2px 1px"></div>
<div style="left:70px;top:175px;width:1px;height:13px;background-image:linear-gradient(to bottom,#a28d68 50%,transparent 50%);background-size:1px 2px"></div>
<div style="left:76px;top:175px;width:4px;height:1px;background-image:linear-gradient(to right,#a28d68 50%,transparent 50%);background-size:2px 1px"></div>
<div style="left:70px;top:188px;width:1px;height:13px;background-image:linear-gradient(to bottom,#a28d68 50%,transparent 50%);background-size:1px 2px"></div>
<div style="left:76px;top:188px;width:4px;height:1px;background-image:linear-gradient(to right,#a28d68 50%,transparent 50%);background-size:2px 1px"></div>
<div style="left:76px;top:201px;width:4px;height:1px;background-image:linear-gradient(to right,#a28d68 50%,transparent 50%);background-size:2px 1px"></div>
<div style="left:50px;top:214px;width:1px;height:39px;background-image:linear-gradient(to bottom,#a28d68 50%,transparent 50%);background-size:1px 2px"></div>
<div style="left:56px;top:214px;width:4px;height:1px;background-image:linear-gradient(to right,#a28d68 50%,transparent 50%);background-size:2px 1px"></div>
<div style="left:70px;top:227px;width:1px;height:13px;background-image:linear-gradient(to bottom,#a28d68 50%,transparent 50%);background-size:1px 2px"></div>
<div style="left:70px;top:220px;width:1px;height:7px;background-image:linear-gradient(to bottom,#a28d68 50%,transparent 50%);background-size:1px 2px"></div>
<div style="left:76px;top:227px;width:4px;height:1px;background-image:linear-gradient(to right,#a28d68 50%,transparent 50%);background-size:2px 1px"></div>
<div style="left:76px;top:240px;width:4px;height:1px;background-image:linear-gradient(to right,#a28d68 50%,transparent 50%);background-size:2px 1px"></div>
<div style="left:50px;top:253px;width:1px;height:13px;background-image:linear-gradient(to bottom,#a28d68 50%,transparent 50%);background-size:1px 2px"></div>
<div style="left:50px;top:253px;width:10px;height:1px;background-image:linear-gradient(to right,#a28d68 50%,transparent 50%);background-size:2px 1px"></div>
<div style="left:56px;top:266px;width:4px;height:1px;background-image:linear-gradient(to right,#a28d68 50%,transparent 50%);background-size:2px 1px"></div>
<div style="left:30px;top:279px;width:1px;height:13px;background-image:linear-gradient(to bottom,#a28d68 50%,transparent 50%);background-size:1px 2px"></div>
<div style="left:30px;top:279px;width:10px;height:1px;background-image:linear-gradient(to right,#a28d68 50%,transparent 50%);background-size:2px 1px"></div>
<div style="left:30px;top:292px;width:1px;height:13px;background-image:linear-gradient(to bottom,#a28d68 50%,transparent 50%);background-size:1px 2px"></div>
<div style="left:30px;top:292px;width:10px;height:1px;background-image:linear-gradient(to right,#a28d68 50%,transparent 50%);background-size:2px 1px"></div>
<div style="left:30px;top:305px;width:1px;height:13px;background-image:linear-gradient(to bottom,#a28d68 50%,transparent 50%);background-size:1px 2px"></div>
<div style="left:30px;top:305px;width:10px;height:1px;background-image:linear-gradient(to right,#a28d68 50%,transparent 50%);background-size:2px 1px"></div>
<div style="left:30px;top:318px;width:10px;height:1px;background-image:linear-gradient(to right,#a28d68 50%,transparent 50%);background-size:2px 1px"></div>
<div style="left:10px;top:331px;width:1px;height:13px;background-image:linear-gradient(to bottom,#a28d68 50%,transparent 50%);background-size:1px 2px"></div>
<div style="left:16px;top:331px;width:4px;height:1px;background-image:linear-gradient(to right,#a28d68 50%,transparent 50%);background-size:2px 1px"></div>
<div style="left:10px;top:344px;width:1px;height:13px;background-image:linear-gradient(to bottom,#a28d68 50%,transparent 50%);background-size:1px 2px"></div>
<div style="left:16px;top:344px;width:4px;height:1px;background-image:linear-gradient(to right,#a28d68 50%,transparent 50%);background-size:2px 1px"></div>
<div style="left:10px;top:357px;width:1px;height:13px;background-image:linear-gradient(to bottom,#a28d68 50%,transparent 50%);background-size:1px 2px"></div>
<div style="left:16px;top:357px;width:4px;height:1px;background-image:linear-gradient(to right,#a28d68 50%,transparent 50%);background-size:2px 1px"></div>
<div style="left:10px;top:370px;width:1px;height:10px;background-image:linear-gradient(to bottom,#a28d68 50%,transparent 50%);background-size:1px 2px"></div>
<div style="left:16px;top:370px;width:4px;height:1px;background-image:linear-gradient(to right,#a28d68 50%,transparent 50%);background-size:2px 1px"></div>
<div style="left:10px;top:0px;width:1px;height:6px;background-image:linear-gradient(to bottom,#a28d68 50%,transparent 50%);background-size:1px 2px"></div>
<div style="left:6px;top:2px;width:9px;height:9px;background:#fff;box-shadow:inset 0 0 0 1px #a28d68"></div>
<div style="left:8px;top:6px;width:5px;height:1px;background:#000"></div>
<div style="left:10px;top:4px;width:1px;height:5px;background:#000"></div>
<div class="t" style="left:24px;top:1px;">access key</div>
<div style="left:6px;top:15px;width:9px;height:9px;background:#fff;box-shadow:inset 0 0 0 1px #a28d68"></div>
<div style="left:8px;top:19px;width:5px;height:1px;background:#000"></div>
<div style="left:10px;top:17px;width:1px;height:5px;background:#000"></div>
<div class="t" style="left:24px;top:14px;">access path</div>
<div style="left:6px;top:28px;width:9px;height:9px;background:#fff;box-shadow:inset 0 0 0 1px #a28d68"></div>
<div style="left:8px;top:32px;width:5px;height:1px;background:#000"></div>
<div style="left:10px;top:30px;width:1px;height:5px;background:#000"></div>
<div class="t" style="left:24px;top:27px;">access type</div>
<div style="left:6px;top:41px;width:9px;height:9px;background:#fff;box-shadow:inset 0 0 0 1px #a28d68"></div>
<div style="left:8px;top:45px;width:5px;height:1px;background:#000"></div>
<div style="left:10px;top:43px;width:1px;height:5px;background:#000"></div>
<div class="t" style="left:24px;top:40px;">action</div>
<div style="left:6px;top:54px;width:9px;height:9px;background:#fff;box-shadow:inset 0 0 0 1px #a28d68"></div>
<div style="left:8px;top:58px;width:5px;height:1px;background:#000"></div>
<div class="t" style="left:24px;top:53px;color:#fff">action sequence</div>
<div style="left:26px;top:67px;width:9px;height:9px;background:#fff;box-shadow:inset 0 0 0 1px #a28d68"></div>
<div style="left:28px;top:71px;width:5px;height:1px;background:#000"></div>
<svg style="left:43px;top:65px" width="16" height="13"><use href="#gen"/></svg>
<div class="t" style="left:65px;top:66px;">action</div>
<div style="left:46px;top:80px;width:9px;height:9px;background:#fff;box-shadow:inset 0 0 0 1px #a28d68"></div>
<div style="left:48px;top:84px;width:5px;height:1px;background:#000"></div>
<svg style="left:63px;top:78px" width="16" height="13"><use href="#spec"/></svg>
<div class="t" style="left:85px;top:78px;font-weight:bold;color:#c05c00;letter-spacing:0.2px">[ Specializations ]</div>
<div style="left:66px;top:93px;width:9px;height:9px;background:#fff;box-shadow:inset 0 0 0 1px #a28d68"></div>
<div style="left:68px;top:97px;width:5px;height:1px;background:#000"></div>
<div style="left:70px;top:95px;width:1px;height:5px;background:#000"></div>
<svg style="left:83px;top:91px" width="16" height="13"><use href="#spec"/></svg>
<div class="t" style="left:105px;top:92px;">function action</div>
<div style="left:66px;top:106px;width:9px;height:9px;background:#fff;box-shadow:inset 0 0 0 1px #a28d68"></div>
<div style="left:68px;top:110px;width:5px;height:1px;background:#000"></div>
<div style="left:70px;top:108px;width:1px;height:5px;background:#000"></div>
<svg style="left:83px;top:104px" width="16" height="13"><use href="#spec"/></svg>
<div class="t" style="left:105px;top:105px;">expression action</div>
<div style="left:66px;top:119px;width:9px;height:9px;background:#fff;box-shadow:inset 0 0 0 1px #a28d68"></div>
<div style="left:68px;top:123px;width:5px;height:1px;background:#000"></div>
<div style="left:70px;top:121px;width:1px;height:5px;background:#000"></div>
<svg style="left:83px;top:117px" width="16" height="13"><use href="#spec"/></svg>
<div class="t" style="left:105px;top:118px;">constant action</div>
<div style="left:66px;top:132px;width:9px;height:9px;background:#fff;box-shadow:inset 0 0 0 1px #a28d68"></div>
<div style="left:68px;top:136px;width:5px;height:1px;background:#000"></div>
<div style="left:70px;top:134px;width:1px;height:5px;background:#000"></div>
<svg style="left:83px;top:130px" width="16" height="13"><use href="#spec"/></svg>
<div class="t" style="left:105px;top:131px;">program action</div>
<div style="left:66px;top:145px;width:9px;height:9px;background:#fff;box-shadow:inset 0 0 0 1px #a28d68"></div>
<div style="left:68px;top:149px;width:5px;height:1px;background:#000"></div>
<div style="left:70px;top:147px;width:1px;height:5px;background:#000"></div>
<svg style="left:83px;top:143px" width="16" height="13"><use href="#spec"/></svg>
<div class="t" style="left:105px;top:144px;">action sequence</div>
<div style="left:66px;top:158px;width:9px;height:9px;background:#fff;box-shadow:inset 0 0 0 1px #a28d68"></div>
<div style="left:68px;top:162px;width:5px;height:1px;background:#000"></div>
<div style="left:70px;top:160px;width:1px;height:5px;background:#000"></div>
<svg style="left:83px;top:156px" width="16" height="13"><use href="#spec"/></svg>
<div class="t" style="left:105px;top:157px;">document action</div>
<div style="left:66px;top:171px;width:9px;height:9px;background:#fff;box-shadow:inset 0 0 0 1px #a28d68"></div>
<div style="left:68px;top:175px;width:5px;height:1px;background:#000"></div>
<div style="left:70px;top:173px;width:1px;height:5px;background:#000"></div>
<svg style="left:83px;top:169px" width="16" height="13"><use href="#spec"/></svg>
<div class="t" style="left:105px;top:170px;">window action</div>
<div style="left:66px;top:184px;width:9px;height:9px;background:#fff;box-shadow:inset 0 0 0 1px #a28d68"></div>
<div style="left:68px;top:188px;width:5px;height:1px;background:#000"></div>
<div style="left:70px;top:186px;width:1px;height:5px;background:#000"></div>
<svg style="left:83px;top:182px" width="16" height="13"><use href="#spec"/></svg>
<div class="t" style="left:105px;top:183px;">menu action</div>
<div style="left:66px;top:197px;width:9px;height:9px;background:#fff;box-shadow:inset 0 0 0 1px #a28d68"></div>
<div style="left:68px;top:201px;width:5px;height:1px;background:#000"></div>
<div style="left:70px;top:199px;width:1px;height:5px;background:#000"></div>
<svg style="left:83px;top:195px" width="16" height="13"><use href="#spec"/></svg>
<div class="t" style="left:105px;top:196px;">pre-handler</div>
<div style="left:46px;top:210px;width:9px;height:9px;background:#fff;box-shadow:inset 0 0 0 1px #a28d68"></div>
<div style="left:48px;top:214px;width:5px;height:1px;background:#000"></div>
<svg style="left:63px;top:208px" width="16" height="13"><use href="#ref"/></svg>
<div class="t" style="left:85px;top:208px;font-weight:bold;color:#c05c00;letter-spacing:0.2px">[ References ]</div>
<div style="left:66px;top:223px;width:9px;height:9px;background:#fff;box-shadow:inset 0 0 0 1px #a28d68"></div>
<div style="left:68px;top:227px;width:5px;height:1px;background:#000"></div>
<div style="left:70px;top:225px;width:1px;height:5px;background:#000"></div>
<svg style="left:83px;top:221px" width="16" height="13"><use href="#ref"/></svg>
<div class="t" style="left:105px;top:222px;">action type</div>
<div style="left:66px;top:236px;width:9px;height:9px;background:#fff;box-shadow:inset 0 0 0 1px #a28d68"></div>
<div style="left:68px;top:240px;width:5px;height:1px;background:#000"></div>
<div style="left:70px;top:238px;width:1px;height:5px;background:#000"></div>
<svg style="left:83px;top:234px" width="16" height="13"><use href="#ref"/></svg>
<div class="t" style="left:105px;top:235px;">conditional action</div>
<svg style="left:63px;top:247px" width="16" height="13"><use href="#refin"/></svg>
<div class="t" style="left:85px;top:247px;font-weight:bold;color:#c05c00;letter-spacing:0.2px">[ Referenced in ]</div>
<div style="left:46px;top:262px;width:9px;height:9px;background:#fff;box-shadow:inset 0 0 0 1px #a28d68"></div>
<div style="left:48px;top:266px;width:5px;height:1px;background:#000"></div>
<div style="left:50px;top:264px;width:1px;height:5px;background:#000"></div>
<div class="t" style="left:64px;top:261px;">[ Topics ]</div>
<svg style="left:43px;top:273px" width="16" height="13"><use href="#spec"/></svg>
<div class="t" style="left:65px;top:273px;font-weight:bold;color:#c05c00;letter-spacing:0.2px">[ Specializations ]</div>
<svg style="left:43px;top:286px" width="16" height="13"><use href="#ref"/></svg>
<div class="t" style="left:65px;top:286px;font-weight:bold;color:#c05c00;letter-spacing:0.2px">[ References ]</div>
<svg style="left:43px;top:299px" width="16" height="13"><use href="#refin"/></svg>
<div class="t" style="left:65px;top:299px;font-weight:bold;color:#c05c00;letter-spacing:0.2px">[ Referenced in ]</div>
<div class="t" style="left:44px;top:313px;">[ Topics ]</div>
<div style="left:6px;top:327px;width:9px;height:9px;background:#fff;box-shadow:inset 0 0 0 1px #a28d68"></div>
<div style="left:8px;top:331px;width:5px;height:1px;background:#000"></div>
<div style="left:10px;top:329px;width:1px;height:5px;background:#000"></div>
<div class="t" style="left:24px;top:326px;">action type</div>
<div style="left:6px;top:340px;width:9px;height:9px;background:#fff;box-shadow:inset 0 0 0 1px #a28d68"></div>
<div style="left:8px;top:344px;width:5px;height:1px;background:#000"></div>
<div style="left:10px;top:342px;width:1px;height:5px;background:#000"></div>
<div class="t" style="left:24px;top:339px;">any type</div>
<div style="left:6px;top:353px;width:9px;height:9px;background:#fff;box-shadow:inset 0 0 0 1px #a28d68"></div>
<div style="left:8px;top:357px;width:5px;height:1px;background:#000"></div>
<div style="left:10px;top:355px;width:1px;height:5px;background:#000"></div>
<div class="t" style="left:24px;top:352px;">application</div>
<div style="left:6px;top:366px;width:9px;height:9px;background:#fff;box-shadow:inset 0 0 0 1px #a28d68"></div>
<div style="left:8px;top:370px;width:5px;height:1px;background:#000"></div>
<div style="left:10px;top:368px;width:1px;height:5px;background:#000"></div>
<div class="t" style="left:24px;top:365px;">application license</div>
</div>
<svg style="left:0;top:509px" width="320" height="20" viewBox="0 0 320 20">
<rect x="83" y="2" width="230" height="1" fill="#a28d68"/>
<rect x="83" y="3" width="230" height="1" fill="#000"/>
<path d="M160.5 3.5L156 13.5Q155.5 14.5 154 14.5H90Q88.5 14.5 88 13.5L83.5 3.5" fill="#d8d0bd" stroke="#000" stroke-width="1"/>
<path d="M235.5 3.5L231 13.5Q230.5 14.5 229 14.5H165Q163.5 14.5 163 13.5L160.5 3.5" fill="#d8d0bd" stroke="#000" stroke-width="1"/>
<path d="M8.5 1.5L13.5 13.5Q14 15.5 16 15.5H76Q78 15.5 78.5 13.5L83.5 2" fill="#fff" stroke="#000" stroke-width="1"/>
<rect x="9" y="0" width="74" height="2" fill="#fff"/>
</svg>
<div class="t" style="left:23px;top:513px;letter-spacing:-0.25px">Concepts</div>
<div class="t" style="left:98px;top:512px;letter-spacing:-0.1px">Keywords</div>
<div class="t" style="left:173px;top:512px;letter-spacing:-0.1px">Stopwords</div>
<div style="left:317px;top:93px;width:1px;height:433px;background:#faf6ee"></div>
<div style="left:321px;top:73px;width:1px;height:453px;background:#a28d68"></div>
<div style="left:322px;top:73px;width:1px;height:453px;background:#000000"></div>
<div style="left:333px;top:83px;width:281px;height:23px;box-shadow:inset 1px 1px #a28d68,inset -1px -1px #faf6ee,inset 2px 2px #000000,inset -2px -2px #d8d0bd;background:#fffbe4"></div>
<div class="t" style="left:338px;top:86px;font-weight:bold;font-size:16px;line-height:19px;color:#143800">action sequence</div>
<div style="left:619px;top:86px;width:98px;height:18px;box-shadow:inset 1px 1px #a28d68,inset -1px -1px #faf6ee,inset 2px 2px #000000,inset -2px -2px #d8d0bd;background:#fff"></div>
<div class="t" style="left:625px;top:90px;letter-spacing:-0.4px">English</div>
<div style="left:701px;top:87px;width:15px;height:16px;box-shadow:inset -1px -1px #000000,inset 1px 1px #d8d0bd,inset -2px -2px #a28d68,inset 2px 2px #faf6ee;background:#d8d0bd"></div>
<svg style="left:705px;top:93px" width="7" height="4" viewBox="0 0 7 4" shape-rendering="crispEdges"><rect x="0" y="0" width="7" height="1" fill="#000"/><rect x="1" y="1" width="5" height="1" fill="#000"/><rect x="2" y="2" width="3" height="1" fill="#000"/><rect x="3" y="3" width="1" height="1" fill="#000"/></svg>
<div class="t" style="left:330px;top:115px;letter-spacing:-0.1px">Characteristic</div>
<div style="left:702px;top:114px;width:14px;height:14px;box-shadow:inset -1px -1px #000000,inset 1px 1px #d8d0bd,inset -2px -2px #a28d68,inset 2px 2px #faf6ee;background:#d8d0bd"></div>
<svg style="left:704px;top:116px" width="10" height="10" viewBox="0 0 10 10" shape-rendering="crispEdges"><rect width="10" height="10" fill="#e07810"/><rect x="0" y="0" width="4" height="10" fill="#f09838"/>
<path d="M2 1H6V2H5V7H7V6H8V9H2V8H3V2H2Z" fill="#fff"/><path d="M6 2V7H5M8 6V9M3 8V9" stroke="#502000" stroke-width="0.6" fill="none"/></svg>
<div style="left:331px;top:129px;width:386px;height:236px;box-shadow:inset 1px 1px #a28d68,inset -1px -1px #f4f0e6;background:#fff"></div>
<div class="t" style="left:336px;top:135px;font-size:13px;line-height:16px;letter-spacing:0.09px">An action sequence is a complex action, which consists of a<br>number of sub actions. Sub actions may run in parallel or<br>sequentially, i.e. the action sequence defines a cyclic directed<br>process graph.</div>
<div style="left:338px;top:367px;width:373px;height:1px;background:#878573"></div>
<div style="left:338px;top:370px;width:373px;height:1px;background:#878573"></div>
<div class="t" style="left:330px;top:373px;letter-spacing:-0.25px">Example</div>
<div style="left:331px;top:387px;width:386px;height:25px;box-shadow:inset 1px 1px #a28d68,inset -1px -1px #f4f0e6;background:#fff"></div>
<div style="left:338px;top:415px;width:373px;height:1px;background:#878573"></div>
<div style="left:338px;top:418px;width:373px;height:1px;background:#878573"></div>
<div class="t" style="left:330px;top:421px;">Notes</div>
<div style="left:702px;top:420px;width:14px;height:14px;box-shadow:inset -1px -1px #000000,inset 1px 1px #d8d0bd,inset -2px -2px #a28d68,inset 2px 2px #faf6ee;background:#d8d0bd"></div>
<svg style="left:704px;top:422px" width="10" height="10" viewBox="0 0 10 10" shape-rendering="crispEdges"><rect width="10" height="10" fill="#e07810"/><rect x="0" y="0" width="4" height="10" fill="#f09838"/>
<path d="M2 1H6V2H5V7H7V6H8V9H2V8H3V2H2Z" fill="#fff"/><path d="M6 2V7H5M8 6V9M3 8V9" stroke="#502000" stroke-width="0.6" fill="none"/></svg>
<div style="left:331px;top:435px;width:386px;height:38px;box-shadow:inset 1px 1px #a28d68,inset -1px -1px #f4f0e6;background:#fff"></div>
<div style="left:338px;top:476px;width:373px;height:1px;background:#878573"></div>
<div style="left:338px;top:479px;width:373px;height:1px;background:#878573"></div>
<div class="t" style="left:330px;top:482px;">Others</div>
<div style="left:331px;top:496px;width:386px;height:21px;box-shadow:inset 1px 1px #a28d68,inset -1px -1px #f4f0e6;background:#fff"></div>
<div style="left:703px;top:496px;width:13px;height:11px;box-shadow:inset -1px -1px #000000,inset 1px 1px #d8d0bd,inset -2px -2px #a28d68,inset 2px 2px #faf6ee;background:#d8d0bd"></div>
<div style="left:703px;top:507px;width:13px;height:10px;box-shadow:inset -1px -1px #000000,inset 1px 1px #d8d0bd,inset -2px -2px #a28d68,inset 2px 2px #faf6ee;background:#d8d0bd"></div>
<svg style="left:708px;top:500px" width="3" height="2" viewBox="0 0 3 2" shape-rendering="crispEdges"><rect x="2" y="0" width="1" height="1" fill="#000"/><rect x="1" y="1" width="2" height="1" fill="#000"/></svg>
<svg style="left:708px;top:511px" width="3" height="2" viewBox="0 0 3 2" shape-rendering="crispEdges"><rect x="0" y="0" width="2" height="1" fill="#000"/><rect x="0" y="1" width="1" height="1" fill="#000"/></svg>
<div style="left:721px;top:73px;width:1px;height:445px;background:#878573"></div>
<div style="left:724px;top:73px;width:1px;height:445px;background:#878573"></div>
<div style="left:729px;top:83px;width:119px;height:17px;box-shadow:inset 1px 1px #a28d68,inset -1px -1px #faf6ee,inset 2px 2px #000000,inset -2px -2px #d8d0bd;background:#fff"></div>
<div class="t" style="left:734px;top:87px;letter-spacing:-0.1px">action sequence</div>
<div class="t" style="left:731px;top:105px;">Type</div>
<div style="left:761px;top:103px;width:85px;height:19px;box-shadow:inset 1px 1px #a28d68,inset -1px -1px #faf6ee,inset 2px 2px #000000,inset -2px -2px #d8d0bd;background:#fff"></div>
<div class="t" style="left:765px;top:107px;">T_undefined</div>
<div style="left:829px;top:104px;width:15px;height:16px;box-shadow:inset -1px -1px #000000,inset 1px 1px #d8d0bd,inset -2px -2px #a28d68,inset 2px 2px #faf6ee;background:#d8d0bd"></div>
<svg style="left:833px;top:111px" width="7" height="4" viewBox="0 0 7 4" shape-rendering="crispEdges"><rect x="0" y="0" width="7" height="1" fill="#000"/><rect x="1" y="1" width="5" height="1" fill="#000"/><rect x="2" y="2" width="3" height="1" fill="#000"/><rect x="3" y="3" width="1" height="1" fill="#000"/></svg>
<div class="t" style="left:731px;top:133px;letter-spacing:-0.2px">Generalizations</div>
<div style="left:731px;top:147px;width:116px;height:20px;box-shadow:inset 1px 1px #faf6ee,inset -1px -1px #a28d68;background:#d8d0bd"></div>
<svg style="left:733px;top:149px" width="16" height="16" viewBox="0 0 16 16">
<path d="M4 4.5L7 7.5" stroke="#402000" stroke-width="3.6" stroke-linecap="round"/>
<path d="M4 4L7 7" stroke="#e0983c" stroke-width="2.6" stroke-linecap="round"/>
<circle cx="7" cy="7" r="1.9" fill="#f09828" stroke="#603000" stroke-width="0.5"/>
<circle cx="4.7" cy="11.5" r="2" fill="#1020d0" stroke="#000040" stroke-width="0.5"/>
<circle cx="11" cy="11.5" r="2" fill="#40d020" stroke="#003000" stroke-width="0.5"/></svg>
<svg style="left:750px;top:149px" width="16" height="16" viewBox="0 0 16 16">
<circle cx="5.7" cy="6.5" r="2.8" fill="#1828d8" stroke="#000040" stroke-width="0.6"/>
<circle cx="10" cy="11" r="2.8" fill="#f0a010" stroke="#402000" stroke-width="0.6"/></svg>
<div style="left:770px;top:151px;width:1px;height:13px;background:#a28d68"></div>
<div style="left:771px;top:151px;width:1px;height:13px;background:#faf6ee"></div>
<svg style="left:776px;top:152px" width="11" height="11" viewBox="0 0 11 11"><path d="M2 2L9 9M9 2L2 9" stroke="#404038" stroke-width="3.6" stroke-linecap="round"/><path d="M2.2 2.2L8.8 8.8M8.8 2.2L2.2 8.8" stroke="#8a8a84" stroke-width="2" stroke-linecap="round"/></svg>
<div style="left:731px;top:167px;width:116px;height:55px;background:#fff;box-shadow:inset 1px 1px #a28d68,inset -1px -1px #f4f0e6"></div>
<div class="t" style="left:735px;top:169px;">action</div>
<div class="t" style="left:731px;top:232px;letter-spacing:-0.2px">References</div>
<div style="left:731px;top:246px;width:116px;height:20px;box-shadow:inset 1px 1px #faf6ee,inset -1px -1px #a28d68;background:#d8d0bd"></div>
<svg style="left:733px;top:248px" width="16" height="16" viewBox="0 0 16 16">
<path d="M4 4.5L7 7.5" stroke="#402000" stroke-width="3.6" stroke-linecap="round"/>
<path d="M4 4L7 7" stroke="#e0983c" stroke-width="2.6" stroke-linecap="round"/>
<circle cx="7" cy="7" r="1.9" fill="#f09828" stroke="#603000" stroke-width="0.5"/>
<circle cx="4.7" cy="11.5" r="2" fill="#1020d0" stroke="#000040" stroke-width="0.5"/>
<circle cx="11" cy="11.5" r="2" fill="#40d020" stroke="#003000" stroke-width="0.5"/></svg>
<svg style="left:750px;top:248px" width="16" height="16" viewBox="0 0 16 16">
<circle cx="5.7" cy="6.5" r="2.8" fill="#1828d8" stroke="#000040" stroke-width="0.6"/>
<circle cx="10" cy="11" r="2.8" fill="#f0a010" stroke="#402000" stroke-width="0.6"/></svg>
<div style="left:770px;top:250px;width:1px;height:13px;background:#a28d68"></div>
<div style="left:771px;top:250px;width:1px;height:13px;background:#faf6ee"></div>
<svg style="left:776px;top:251px" width="11" height="11" viewBox="0 0 11 11"><path d="M2 2L9 9M9 2L2 9" stroke="#404038" stroke-width="3.6" stroke-linecap="round"/><path d="M2.2 2.2L8.8 8.8M8.8 2.2L2.2 8.8" stroke="#8a8a84" stroke-width="2" stroke-linecap="round"/></svg>
<div style="left:731px;top:266px;width:116px;height:55px;background:#fff;box-shadow:inset 1px 1px #a28d68,inset -1px -1px #f4f0e6"></div>
<div class="t" style="left:731px;top:331px;letter-spacing:-0.2px">Synonyms</div>
<div style="left:731px;top:345px;width:116px;height:20px;box-shadow:inset 1px 1px #faf6ee,inset -1px -1px #a28d68;background:#d8d0bd"></div>
<svg style="left:733px;top:347px" width="16" height="16" viewBox="0 0 16 16">
<path d="M4 4.5L7 7.5" stroke="#402000" stroke-width="3.6" stroke-linecap="round"/>
<path d="M4 4L7 7" stroke="#e0983c" stroke-width="2.6" stroke-linecap="round"/>
<circle cx="7" cy="7" r="1.9" fill="#f09828" stroke="#603000" stroke-width="0.5"/>
<circle cx="4.7" cy="11.5" r="2" fill="#1020d0" stroke="#000040" stroke-width="0.5"/>
<circle cx="11" cy="11.5" r="2" fill="#40d020" stroke="#003000" stroke-width="0.5"/></svg>
<svg style="left:750px;top:347px" width="16" height="16" viewBox="0 0 16 16">
<circle cx="5.7" cy="6.5" r="2.8" fill="#1828d8" stroke="#000040" stroke-width="0.6"/>
<circle cx="10" cy="11" r="2.8" fill="#f0a010" stroke="#402000" stroke-width="0.6"/></svg>
<div style="left:770px;top:349px;width:1px;height:13px;background:#a28d68"></div>
<div style="left:771px;top:349px;width:1px;height:13px;background:#faf6ee"></div>
<svg style="left:776px;top:350px" width="11" height="11" viewBox="0 0 11 11"><path d="M2 2L9 9M9 2L2 9" stroke="#404038" stroke-width="3.6" stroke-linecap="round"/><path d="M2.2 2.2L8.8 8.8M8.8 2.2L2.2 8.8" stroke="#8a8a84" stroke-width="2" stroke-linecap="round"/></svg>
<div style="left:731px;top:365px;width:116px;height:56px;background:#fff;box-shadow:inset 1px 1px #a28d68,inset -1px -1px #f4f0e6"></div>
<div class="t" style="left:729px;top:430px;letter-spacing:-0.2px">Topics</div>
<div style="left:729px;top:443px;width:116px;height:20px;box-shadow:inset 1px 1px #faf6ee,inset -1px -1px #a28d68;background:#d8d0bd"></div>
<svg style="left:731px;top:445px" width="16" height="16" viewBox="0 0 16 16">
<path d="M4 4.5L7 7.5" stroke="#303030" stroke-width="3.6" stroke-linecap="round"/>
<path d="M4 4L7 7" stroke="#a8a8a8" stroke-width="2.6" stroke-linecap="round"/>
<circle cx="7" cy="7" r="1.9" fill="#b0b0b0" stroke="#404040" stroke-width="0.5"/>
<circle cx="4.7" cy="11.5" r="2" fill="#505050" stroke="#202020" stroke-width="0.5"/>
<rect x="9.5" y="10" width="3" height="3" fill="#f0f0f0" stroke="#909090" stroke-width="0.6"/></svg>
<svg style="left:748px;top:445px" width="16" height="16" viewBox="0 0 16 16">
<circle cx="5.7" cy="6.5" r="2.8" fill="#1828d8" stroke="#000040" stroke-width="0.6"/>
<circle cx="10" cy="11" r="2.8" fill="#f0a010" stroke="#402000" stroke-width="0.6"/></svg>
<div style="left:768px;top:447px;width:1px;height:13px;background:#a28d68"></div>
<div style="left:769px;top:447px;width:1px;height:13px;background:#faf6ee"></div>
<svg style="left:772px;top:447px" width="11" height="13" viewBox="0 0 11 13"><path d="M5.5 0.5L10.5 5.5H8V12.5H3V5.5H0.5Z" fill="#c8c8c0" stroke="#606058"/><path d="M4 6V12" stroke="#f0f0e8"/></svg>
<svg style="left:789px;top:447px" width="11" height="13" viewBox="0 0 11 13"><path d="M5.5 12.5L10.5 7.5H8V0.5H3V7.5H0.5Z" fill="#c8c8c0" stroke="#606058"/><path d="M4 1V7" stroke="#f0f0e8"/></svg>
<svg style="left:807px;top:448px" width="11" height="11" viewBox="0 0 11 11"><path d="M2 2L9 9M9 2L2 9" stroke="#404038" stroke-width="3.6" stroke-linecap="round"/><path d="M2.2 2.2L8.8 8.8M8.8 2.2L2.2 8.8" stroke="#8a8a84" stroke-width="2" stroke-linecap="round"/></svg>
<div style="left:729px;top:463px;width:116px;height:55px;background:#fff;box-shadow:inset 1px 1px #a28d68,inset -1px -1px #f4f0e6"></div>
</body></html>
